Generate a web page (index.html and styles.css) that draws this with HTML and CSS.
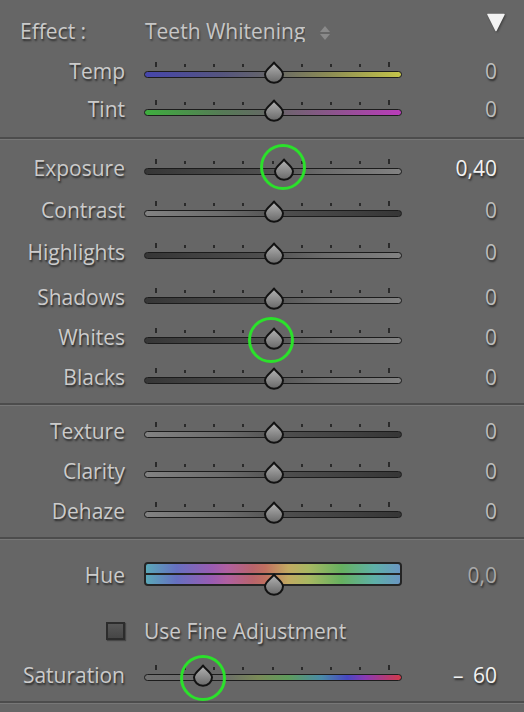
FILE: index.html
```html
<!DOCTYPE html>
<html lang="en">
<head>
<meta charset="utf-8">
<title>Teeth Whitening</title>
<link rel="stylesheet" href="styles.css">
</head>
<body>
<svg class="defs" width="0" height="0" aria-hidden="true">
  <defs>
    <linearGradient id="thumbGrad" x1="0" y1="0" x2="0" y2="1">
      <stop offset="0" stop-color="#b4b4b4"/>
      <stop offset="1" stop-color="#686868"/>
    </linearGradient>
  </defs>
</svg>
<div class="panel">
  <section class="sec sec-1">
    <div class="header">
      <span class="effect-label">Effect :</span>
      <span class="popup-text">Teeth Whitening</span>
      <svg class="updown" viewBox="0 0 10 14"><polygon points="5,0 10,6 0,6"/><polygon points="0,8 10,8 5,14"/></svg>
      <svg class="disclosure" viewBox="0 0 18 19"><polygon points="1,1.5 17,1.5 9,17.5"/></svg>
    </div>
    <div class="row r38">
      <span class="label">Temp</span>
      <div class="slider">
        <div class="ticks"><i></i><i></i><i></i><i></i><i></i><i></i><i></i><i></i><i></i></div>
        <div class="track t-temp"></div>
        <div class="thumb" style="left:50.4%"><svg viewBox="0 0 22 22"><path d="M11 1.5C12.8 4.8 20 8.6 20 13.2A9 8.6 0 0 1 2 13.2C2 8.6 9.2 4.8 11 1.5Z"/></svg></div>
      </div>
      <span class="value">0</span>
    </div>
    <div class="row r38">
      <span class="label">Tint</span>
      <div class="slider">
        <div class="ticks"><i></i><i></i><i></i><i></i><i></i><i></i><i></i><i></i><i></i></div>
        <div class="track t-tint"></div>
        <div class="thumb" style="left:50.4%"><svg viewBox="0 0 22 22"><path d="M11 1.5C12.8 4.8 20 8.6 20 13.2A9 8.6 0 0 1 2 13.2C2 8.6 9.2 4.8 11 1.5Z"/></svg></div>
      </div>
      <span class="value">0</span>
    </div>
  </section>
  <div class="divider"></div>
  <section class="sec sec-2">
    <div class="row r42">
      <span class="label">Exposure</span>
      <div class="slider">
        <div class="ticks"><i></i><i></i><i></i><i></i><i></i><i></i><i></i><i></i><i></i></div>
        <div class="track t-up"></div>
        <div class="thumb" style="left:54.3%"><svg viewBox="0 0 22 22"><path d="M11 1.5C12.8 4.8 20 8.6 20 13.2A9 8.6 0 0 1 2 13.2C2 8.6 9.2 4.8 11 1.5Z"/></svg><span class="ring ring-a"></span></div>
      </div>
      <span class="value on">0,40</span>
    </div>
    <div class="row r42">
      <span class="label">Contrast</span>
      <div class="slider">
        <div class="ticks"><i></i><i></i><i></i><i></i><i></i><i></i><i></i><i></i><i></i></div>
        <div class="track t-down"></div>
        <div class="thumb" style="left:50.4%"><svg viewBox="0 0 22 22"><path d="M11 1.5C12.8 4.8 20 8.6 20 13.2A9 8.6 0 0 1 2 13.2C2 8.6 9.2 4.8 11 1.5Z"/></svg></div>
      </div>
      <span class="value">0</span>
    </div>
    <div class="row r42 gap-after">
      <span class="label">Highlights</span>
      <div class="slider">
        <div class="ticks"><i></i><i></i><i></i><i></i><i></i><i></i><i></i><i></i><i></i></div>
        <div class="track t-up"></div>
        <div class="thumb" style="left:50.4%"><svg viewBox="0 0 22 22"><path d="M11 1.5C12.8 4.8 20 8.6 20 13.2A9 8.6 0 0 1 2 13.2C2 8.6 9.2 4.8 11 1.5Z"/></svg></div>
      </div>
      <span class="value">0</span>
    </div>
    <div class="row">
      <span class="label">Shadows</span>
      <div class="slider">
        <div class="ticks"><i></i><i></i><i></i><i></i><i></i><i></i><i></i><i></i><i></i></div>
        <div class="track t-up"></div>
        <div class="thumb" style="left:50.4%"><svg viewBox="0 0 22 22"><path d="M11 1.5C12.8 4.8 20 8.6 20 13.2A9 8.6 0 0 1 2 13.2C2 8.6 9.2 4.8 11 1.5Z"/></svg></div>
      </div>
      <span class="value">0</span>
    </div>
    <div class="row">
      <span class="label">Whites</span>
      <div class="slider">
        <div class="ticks"><i></i><i></i><i></i><i></i><i></i><i></i><i></i><i></i><i></i></div>
        <div class="track t-up"></div>
        <div class="thumb" style="left:50.4%"><svg viewBox="0 0 22 22"><path d="M11 1.5C12.8 4.8 20 8.6 20 13.2A9 8.6 0 0 1 2 13.2C2 8.6 9.2 4.8 11 1.5Z"/></svg><span class="ring ring-b"></span></div>
      </div>
      <span class="value">0</span>
    </div>
    <div class="row">
      <span class="label">Blacks</span>
      <div class="slider">
        <div class="ticks"><i></i><i></i><i></i><i></i><i></i><i></i><i></i><i></i><i></i></div>
        <div class="track t-up"></div>
        <div class="thumb" style="left:50.4%"><svg viewBox="0 0 22 22"><path d="M11 1.5C12.8 4.8 20 8.6 20 13.2A9 8.6 0 0 1 2 13.2C2 8.6 9.2 4.8 11 1.5Z"/></svg></div>
      </div>
      <span class="value">0</span>
    </div>
  </section>
  <div class="divider"></div>
  <section class="sec sec-3">
    <div class="row">
      <span class="label">Texture</span>
      <div class="slider">
        <div class="ticks"><i></i><i></i><i></i><i></i><i></i><i></i><i></i><i></i><i></i></div>
        <div class="track t-down"></div>
        <div class="thumb" style="left:50.4%"><svg viewBox="0 0 22 22"><path d="M11 1.5C12.8 4.8 20 8.6 20 13.2A9 8.6 0 0 1 2 13.2C2 8.6 9.2 4.8 11 1.5Z"/></svg></div>
      </div>
      <span class="value">0</span>
    </div>
    <div class="row">
      <span class="label">Clarity</span>
      <div class="slider">
        <div class="ticks"><i></i><i></i><i></i><i></i><i></i><i></i><i></i><i></i><i></i></div>
        <div class="track t-down"></div>
        <div class="thumb" style="left:50.4%"><svg viewBox="0 0 22 22"><path d="M11 1.5C12.8 4.8 20 8.6 20 13.2A9 8.6 0 0 1 2 13.2C2 8.6 9.2 4.8 11 1.5Z"/></svg></div>
      </div>
      <span class="value">0</span>
    </div>
    <div class="row">
      <span class="label">Dehaze</span>
      <div class="slider">
        <div class="ticks"><i></i><i></i><i></i><i></i><i></i><i></i><i></i><i></i><i></i></div>
        <div class="track t-down"></div>
        <div class="thumb" style="left:50.4%"><svg viewBox="0 0 22 22"><path d="M11 1.5C12.8 4.8 20 8.6 20 13.2A9 8.6 0 0 1 2 13.2C2 8.6 9.2 4.8 11 1.5Z"/></svg></div>
      </div>
      <span class="value">0</span>
    </div>
  </section>
  <div class="divider"></div>
  <section class="sec sec-4">
    <div class="row hue-row">
      <span class="label">Hue</span>
      <div class="slider">
        <div class="huebar"><div class="hue-half"></div><div class="hue-half"></div></div>
        <div class="thumb thumb-hue" style="left:50.4%"><svg viewBox="0 0 22 22"><path d="M11 1.5C12.8 4.8 20 8.6 20 13.2A9 8.6 0 0 1 2 13.2C2 8.6 9.2 4.8 11 1.5Z"/></svg></div>
      </div>
      <span class="value dim">0,0</span>
    </div>
    <div class="row check-row">
      <span class="checkbox"></span>
      <span class="check-label">Use Fine Adjustment</span>
    </div>
    <div class="row sat-row">
      <span class="label">Saturation</span>
      <div class="slider">
        <div class="ticks"><i></i><i></i><i></i><i></i><i></i><i></i><i></i><i></i><i></i></div>
        <div class="track t-sat"></div>
        <div class="thumb" style="left:22.9%"><svg viewBox="0 0 22 22"><path d="M11 1.5C12.8 4.8 20 8.6 20 13.2A9 8.6 0 0 1 2 13.2C2 8.6 9.2 4.8 11 1.5Z"/></svg><span class="ring ring-c"></span></div>
      </div>
      <span class="value on wide">– 60</span>
    </div>
  </section>
  <div class="divider"></div>
</div>
</body>
</html>
```
FILE: styles.css
```css
* { box-sizing: border-box; }
html, body { margin: 0; padding: 0; }
body {
  width: 524px;
  height: 712px;
  overflow: hidden;
  background: #666666;
  font-family: "Open Sans", "Noto Sans", sans-serif;
  font-size: 21px;
  color: #c9c9c9;
}
.defs { display: block; width: 0; height: 0; overflow: hidden; }

.panel { display: flex; flex-direction: column; }

.sec-1 { padding-bottom: 7px; }
.sec-2 { padding: 9px 0 4px; }
.sec-3 { padding: 7px 0 4px; }
.sec-4 { padding: 14px 0 5px; }

.divider {
  height: 3px;
  border-top: 2px solid #4c4c4c;
  border-bottom: 1px solid #777777;
}

/* header */
.header {
  height: 54px;
  display: flex;
  align-items: flex-start;
  padding-top: 13px;
}
.effect-label {
  width: 144px;
  padding-left: 20px;
  margin-top: 8px;
  line-height: 21px;
  color: #cacaca;
  text-shadow: 1px 2px 2px rgba(0,0,0,0.55);
}
.popup-text {
  display: block;
  height: 21px;
  overflow: hidden;
  margin-top: 8px;
  line-height: 21px;
  padding-left: 1px;
  color: #c6c6c6;
  text-shadow: 1px 2px 2px rgba(0,0,0,0.4);
}
.updown {
  display: block;
  width: 10px;
  height: 14px;
  margin-left: 15px;
  margin-top: 13px;
  fill: #8a8a8a;
}
.disclosure {
  display: block;
  width: 18px;
  height: 19px;
  margin-left: auto;
  margin-right: 19px;
  fill: #f2f2f2;
  stroke: #f2f2f2;
  stroke-width: 1.5;
  stroke-linejoin: round;
  filter: drop-shadow(1px 1px 1px rgba(0,0,0,0.4));
}

/* rows */
.row {
  display: grid;
  grid-template-columns: 125px 258px 1fr;
  column-gap: 19px;
  padding-right: 27px;
  align-items: center;
  height: 40px;
}
.r38 { height: 38px; }
.r42 { height: 42px; }
.gap-after { margin-bottom: 4px; }

.label, .value, .check-label {
  line-height: 21px;
  white-space: nowrap;
  text-shadow: 1px 2px 2px rgba(0,0,0,0.6);
}
.label { text-align: right; margin-bottom: 4px; color: #cbcbcb; }
.value { text-align: right; margin-bottom: 4px; color: #bcbcbc; }
.value.on { color: #f2f2f2; }
.value.dim { color: #a9a9a9; }
.value.wide { word-spacing: 4px; }

.hue-row .label, .hue-row .value { margin-bottom: 0; margin-top: 2px; }
.sat-row .label, .sat-row .value { margin-bottom: 2px; }

.check-row { margin-top: 17px; }
.sat-row { margin-top: 5px; }

/* slider */
.slider {
  position: relative;
  height: 24px;
  display: flex;
  flex-direction: column;
}
.ticks {
  display: flex;
  justify-content: space-between;
  align-items: flex-end;
  height: 5px;
  margin-top: 1px;
  padding: 0 12px 0 11px;
}
.ticks i {
  display: block;
  width: 2px;
  height: 3px;
  background: #2a2a2a;
}
.ticks i:first-child, .ticks i:last-child { height: 5px; }

.track {
  height: 7px;
  margin-top: 4px;
  border: 1.5px solid #1c1c1c;
  border-radius: 4px;
}
.t-temp { background: linear-gradient(to right, #4646ac 0%, #55557e 30%, #676767 50%, #8c8c55 72%, #c4c44a 100%); }
.t-tint { background: linear-gradient(to right, #3eae3e 0%, #567a56 30%, #676767 50%, #8a568a 72%, #ba3cba 100%); }
.t-up { background: linear-gradient(to right, #363636 0%, #4e4e4e 45%, #6c6c6c 70%, #828282 100%); }
.t-down { background: linear-gradient(to right, #828282 0%, #6c6c6c 30%, #4e4e4e 55%, #363636 100%); }
.t-sat { background: linear-gradient(to right, #707070 0%, #6a6a6a 30%, #7a8a58 44%, #5e9c5c 56%, #4a8aa8 69%, #4848c2 79%, #8a3ab4 86%, #d23a4a 100%); }

.huebar {
  height: 24px;
  border: 2px solid #242424;
  border-radius: 4px;
  background: #242424;
  display: flex;
  flex-direction: column;
  gap: 2px;
  overflow: hidden;
}
.hue-half {
  flex: 1;
  background: linear-gradient(to right, #5aa8b8 0%, #6670c0 12%, #9a5cb2 26%, #b060a0 32%, #b8646c 42%, #c07060 47%, #c2aa62 56%, #a8b862 64%, #66b060 77%, #5eb0a8 90%, #6a96c2 100%);
}

.thumb {
  position: absolute;
  top: 0;
  width: 22px;
  height: 22px;
  margin-left: -11px;
}
.thumb-hue { top: 11px; }
.thumb svg { display: block; width: 22px; height: 22px; overflow: visible; }
.thumb path {
  fill: url(#thumbGrad);
  stroke: #121212;
  stroke-width: 2;
  stroke-linejoin: round;
}

.ring {
  position: absolute;
  width: 46px;
  height: 46px;
  border: 3.5px solid #2be12b;
  border-radius: 50%;
}
.ring-a { top: -14px; left: -13px; }
.ring-b { top: -10px; left: -15px; }
.ring-c { top: -9px; left: -12px; }

/* checkbox */
.checkbox {
  justify-self: end;
  width: 19px;
  height: 18px;
  border: 2px solid #2c2c2c;
  background: linear-gradient(#575757, #464646);
  box-shadow: 1px 1px 1px rgba(0,0,0,0.3);
}
.check-label { color: #c9c9c9; }
```
